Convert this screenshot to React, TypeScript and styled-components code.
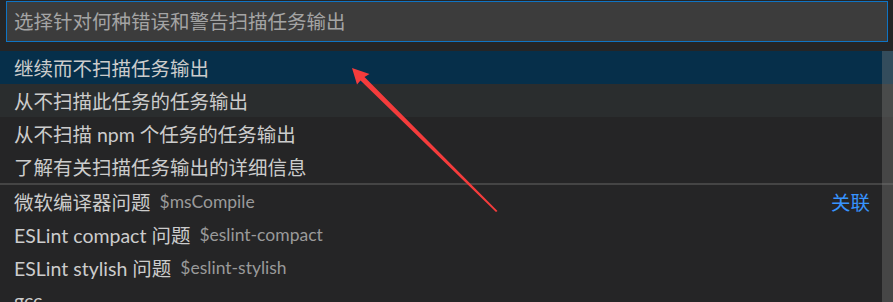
import styled, { createGlobalStyle } from "styled-components";

const GlobalStyle = createGlobalStyle`
    html, body {
        margin: 0;
        padding: 0;
        background: #252526;
        overflow: hidden;
    }
`;

const font = `Lato, "Noto Sans CJK SC", sans-serif`;

const Widget = styled.div`
    position: relative;
    width: 893px;
    height: 302px;
    overflow: hidden;
    background: #252526;
    font-family: ${font};
    font-size: 19.5px;
    color: #cccccc;
`;

const InputArea = styled.div`
    padding: 1px 5px 9px 6px;
`;

const FilterInput = styled.input`
    display: block;
    box-sizing: border-box;
    width: 100%;
    height: 41px;
    margin: 0;
    padding: 0 7px;
    border: 1px solid #0f74c4;
    background: #3c3c3c;
    color: #cccccc;
    font-family: ${font};
    font-size: 19.5px;
    outline: none;

    &::placeholder {
        color: #a4a4a4;
        opacity: 1;
    }
`;

const List = styled.div`
    position: relative;
`;

interface RowProps {
    $tone?: "selected" | "hover";
    $separated?: boolean;
}

const Row = styled.div<RowProps>`
    display: flex;
    align-items: center;
    height: 33px;
    padding: 0 23px 0 14px;
    white-space: nowrap;
    background: ${({ $tone }) =>
        $tone === "selected" ? "#062f4a" : $tone === "hover" ? "#2a2d2e" : "transparent"};
    border-top: ${({ $separated }) => ($separated ? "2px solid #454545" : "none")};
`;

const Label = styled.span`
    color: #cccccc;
`;

const Description = styled.span`
    margin-left: 9px;
    font-size: 17.5px;
    color: #9a9a9a;
`;

const Link = styled.span`
    margin-left: auto;
    color: #3794ff;
    cursor: pointer;
`;

const Scrollbar = styled.div`
    position: absolute;
    top: 0;
    right: 0;
    bottom: 0;
    width: 11px;
    background: rgba(121, 121, 121, 0.4);
`;

const Arrow = styled.svg`
    position: absolute;
    left: 0;
    top: 0;
    pointer-events: none;
`;

type Item = {
    label: string;
    description?: string;
    link?: string;
    tone?: "selected" | "hover";
    separated?: boolean;
};

const items: Item[] = [
    { label: "继续而不扫描任务输出", tone: "selected" },
    { label: "从不扫描此任务的任务输出", tone: "hover" },
    { label: "从不扫描 npm 个任务的任务输出" },
    { label: "了解有关扫描任务输出的详细信息" },
    { label: "微软编译器问题", description: "$msCompile", link: "关联", separated: true },
    { label: "ESLint compact 问题", description: "$eslint-compact" },
    { label: "ESLint stylish 问题", description: "$eslint-stylish" },
    { label: "gcc" },
];

export default function App() {
    return (
        <>
            <GlobalStyle />
            <Widget>
                <InputArea>
                    <FilterInput placeholder="选择针对何种错误和警告扫描任务输出" readOnly />
                </InputArea>
                <List>
                    {items.map((item) => (
                        <Row key={item.label} $tone={item.tone} $separated={item.separated}>
                            <Label>{item.label}</Label>
                            {item.description && <Description>{item.description}</Description>}
                            {item.link && <Link>{item.link}</Link>}
                        </Row>
                    ))}
                    <Scrollbar />
                </List>
                <Arrow width="893" height="302" viewBox="0 0 893 302">
                    <polygon
                        points="352,68 369.5,74 364.5,77 497.5,211 496,212 360.5,80.5 357,84.5"
                        fill="#f43c3c"
                    />
                </Arrow>
            </Widget>
        </>
    );
}
